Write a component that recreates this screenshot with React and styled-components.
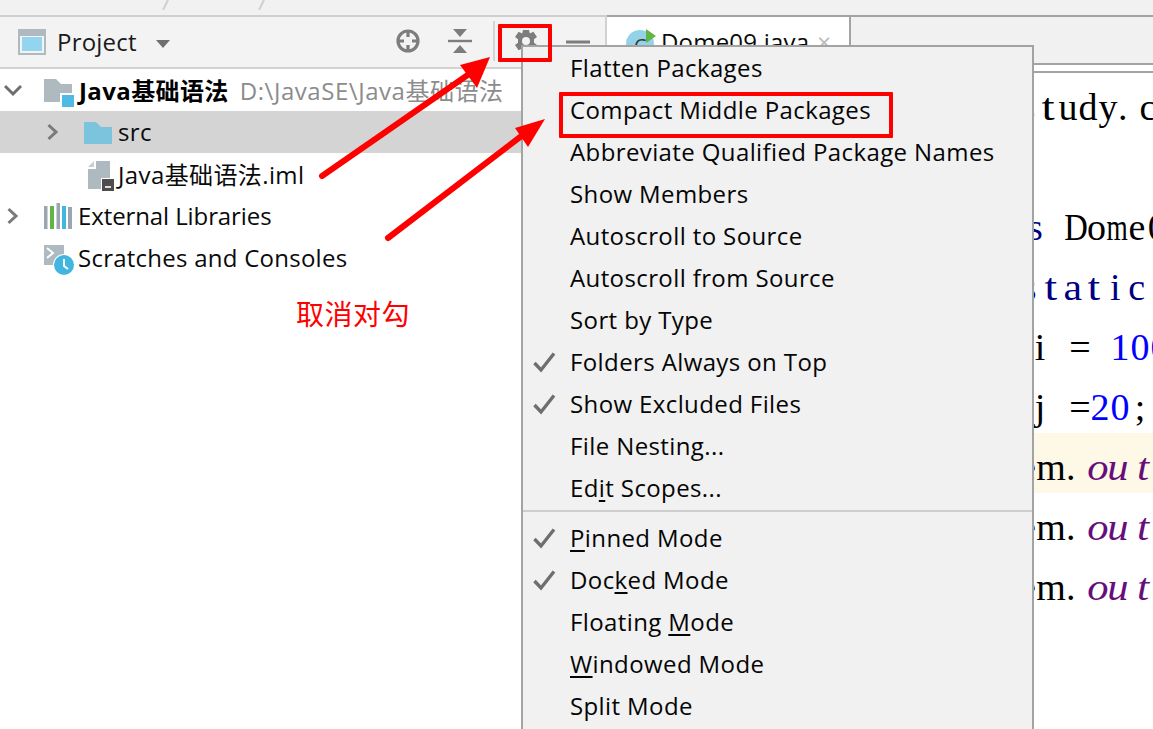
import React from "react";
import styled, { createGlobalStyle } from "styled-components";

const Global = createGlobalStyle`
  html, body { margin: 0; padding: 0; background: #fff; overflow: hidden; }
  #root { width: 1153px; height: 729px; }
`;
const UI = `"Open Sans", "Noto Sans CJK SC", sans-serif`;

const Page = styled.div`
  position: relative; width: 1153px; height: 729px; overflow: hidden;
  font-family: ${UI}; font-size: 24px; letter-spacing: 0.39px; color: #0a0a0a; background: #fff;
`;
const TopStrip = styled.div`
  position: relative; height: 15px; background: #f1f1f1; border-bottom: 2px solid #cfcfcf;
`;
const Tick = styled.svg`
  position: absolute; top: 0; left: ${p => p.$x}px; width: 8px; height: 10px;
`;
const Workspace = styled.div`
  display: grid; grid-template-columns: 607px 1fr; height: 712px;
`;
const ProjectPanel = styled.section`display: flex; flex-direction: column;`;
const Toolbar = styled.div`
  display: flex; align-items: center; height: 50px; padding-left: 18px; background: #f3f3f3;
  border-bottom: 2px solid #d2d2d2; border-right: 2px solid #d2d2d2; flex: none;
`;
const ProjectGlyph = styled.svg`width: 28px; height: 26px; flex: none;`;
const ToolTitle = styled.span`margin-left: 11px; line-height: 48px; color: #1a1a1a; letter-spacing: 0.2px;`;
const ToolGroup = styled.div`display: flex; align-items: center; margin-left: ${p => p.$ml}px;`;
const ToolButton = styled.svg`
  width: ${p => p.$w || 24}px; height: 24px; flex: none; margin-left: ${p => p.$ml || 0}px; margin-top: -2px;
`;
const ToolDivider = styled.div`width: 2px; height: 40px; background: #d4d4d4; margin-left: 21px; margin-top: -2px;`;
const Tree = styled.div`display: flex; flex-direction: column;`;
const TreeRow = styled.div`
  display: flex; align-items: center; height: 42px; padding-left: ${p => p.$indent}px;
  background: ${p => (p.$selected ? "#d4d4d4" : "#fff")}; white-space: nowrap;
`;
const RowText = styled.span`margin-top: -1px; letter-spacing: ${p => p.$ls ?? 0.39}px;`;
const Chevron = styled.svg`width: 18px; height: 18px; flex: none; margin-right: ${p => p.$mr}px;`;
const NodeIcon = styled.svg`width: 32px; height: 32px; flex: none; margin-right: ${p => p.$mr}px; margin-top: 6px;`;
const Bold = styled.strong`font-weight: 700; color: #000; margin-top: -1px; margin-left: 1px;`;
const PathHint = styled.span`color: #8c8c8c; margin-left: 11px; margin-top: -1px; letter-spacing: 0.55px;`;

const EditorPane = styled.section`display: flex; flex-direction: column; position: relative;`;
const TabBar = styled.div`
  display: flex; height: 46px; margin-top: -2px; background: #f1f1f1;
  border-top: 2px solid #a3a3a3; border-bottom: 2px solid #a3a3a3; flex: none;
`;
const Tab = styled.div`
  display: flex; align-items: flex-start; width: 244px; height: 46px; background: #fff; box-sizing: border-box;
  border-right: 2px solid #a3a3a3; padding-left: 19px; padding-top: 8px; line-height: 33px; letter-spacing: 0.2px;
`;
const TabIcon = styled.svg`width: 30px; height: 30px; flex: none; margin-right: 5px; margin-top: 3px;`;
const TabClose = styled.span`color: #b8b8b8; margin-left: 8px;`;
const SubBar = styled.div`height: 6px; background: #fff; border-bottom: 2px solid #a3a3a3; flex: none;`;
const CodeArea = styled.div`display: flex; flex-direction: column; background: #fff;`;
const CodeLine = styled.div`
  height: 60px; display: flex; align-items: center; white-space: nowrap;
  padding-left: ${p => p.$pl}px; background: ${p => (p.$current ? "#fef8e7" : "transparent")};
  font-family: "Liberation Serif", serif; font-size: 38px; letter-spacing: 0;
`;
const Ch = styled.span`
  display: flex; justify-content: ${p => (p.$flush ? "flex-start" : "center")}; flex: none; width: ${p => p.$w}px;
  color: ${p => p.$c || "#000"};
  font-style: ${p => (p.$i ? "italic" : "normal")}; transform: translateY(4px) scaleX(${p => p.$sx || 1});
`;

const Menu = styled.nav`
  position: absolute; left: 521px; top: 45px; width: 513px; height: 700px; box-sizing: border-box;
  background: #f1f1f1; border: 2px solid #a3a3a3; border-bottom: 0;
  display: flex; flex-direction: column;
`;
const MenuItem = styled.div`
  position: relative; height: 42px; line-height: 42px; padding-left: 47px; white-space: nowrap; color: #050505; flex: none;
`;
const Check = styled.svg`position: absolute; left: 9px; top: 9px; width: 24px; height: 24px;`;
const Key = styled.span`text-decoration: underline; text-underline-offset: 3px; text-decoration-thickness: 2px;`;
const Sep = styled.div`height: 2px; background: #cdcdcd; margin: 1px 0 5px; flex: none;`;

const Overlay = styled.div`position: absolute; inset: 0; pointer-events: none;`;
const Mark = styled.div`
  position: absolute; box-sizing: border-box; border: 4px solid #f00; border-radius: 1px;
  left: ${p => p.$x}px; top: ${p => p.$y}px; width: ${p => p.$w}px; height: ${p => p.$h}px;
`;
const Arrows = styled.svg`position: absolute; left: 0; top: 0;`;
const Note = styled.div`
  position: absolute; left: 296px; top: 294px; font: 28px/38px "Noto Sans CJK SC", sans-serif; color: #f00; letter-spacing: 0.5px;
`;

const CheckMark = () => (
  <Check viewBox="0 0 24 24"><path d="M2.5 13 L9 20 L22 3.5" fill="none" stroke="#6e6e6e" strokeWidth="3.4" /></Check>
);
const items = [
  ["Flatten Packages"], ["Compact Middle Packages"], ["Abbreviate Qualified Package Names"], ["Show Members"],
  ["Autoscroll to Source"], ["Autoscroll from Source"], ["Sort by Type"],
  ["Folders Always on Top", true], ["Show Excluded Files", true], ["File Nesting..."],
];

const EDITOR_X = 607;
// anchor: index of a char and the page x where its cell must start
const Code = ({ text, width = () => 20, anchor, x, current, color, italicFrom, squeeze }) => {
  const chars = [...text];
  const before = chars.slice(0, anchor).reduce((s, c, i) => s + width(c, i), 0);
  return (
    <CodeLine $pl={Math.max(0, x - EDITOR_X - before)} $current={current}>
      {chars.map((c, i) => (
        <Ch
          key={i}
          $w={width(c, i)}
          $c={color ? color(i) : undefined}
          $flush={c === "."}
          $sx={squeeze ? squeeze(c) : 1}
          $i={italicFrom !== undefined && i >= italicFrom}
        >
          {c === " " ? "\u00a0" : c}
        </Ch>
      ))}
    </CodeLine>
  );
};
const Right = ({ x }) => <Chevron $mr={x} viewBox="0 0 18 18"><path d="M5.5 2 L13 9 L5.5 16" fill="none" stroke="#7a7a7a" strokeWidth="3" /></Chevron>;

const NAVY = "#000080";
const domeSqueeze = (c) => ({ D: 0.86, m: 0.72 }[c] || 1);
const sysWidth = (c, i) => (c === "m" ? 30 : i === 4 ? 17 : i === 9 ? 30 : c === "." && i === 6 ? 22 : 20);
const sysStretch = (c) => ({ o: 1.12, u: 1.12, t: 1.15 }[c] || 1);
const staticStretch = (c) => ({ t: 1.2, a: 1.1 }[c] || 1);

export default function App() {
  const sysColor = (i) => (i >= 7 && i < 10 ? "#660e7a" : "#000");
  return (
    <Page>
      <Global />
      <TopStrip>
        <Tick $x={162} viewBox="0 0 8 10"><path d="M1 10 L6 0" stroke="#cfcfcf" strokeWidth="2" /></Tick>
        <Tick $x={258} viewBox="0 0 8 10"><path d="M1 10 L6 0" stroke="#cfcfcf" strokeWidth="2" /></Tick>
      </TopStrip>
      <Workspace>
        <ProjectPanel>
          <Toolbar>
            <ProjectGlyph viewBox="0 0 28 26">
              <rect width="28" height="26" fill="#afb9c0" />
              <rect x="2" y="7" width="24" height="17" fill="#f3f3f3" />
              <rect x="4" y="8" width="20" height="14" fill="#93d4ee" />
            </ProjectGlyph>
            <ToolTitle>Project</ToolTitle>
            <ToolButton $ml={18} $w={16} viewBox="0 0 16 24"><path d="M1 11 H15 L8 19 Z" fill="#6e6e6e" /></ToolButton>
            <ToolGroup $ml={225}>
              <ToolButton viewBox="0 0 24 24">
                <circle cx="12" cy="12" r="10" fill="none" stroke="#7d7d7d" strokeWidth="3.2" />
                <path d="M12 2 V8 M12 16 V22 M2 12 H8 M16 12 H22" stroke="#7d7d7d" strokeWidth="3.2" />
              </ToolButton>
              <ToolButton $ml={28} viewBox="0 0 24 24">
                <path d="M0 12 H24" stroke="#7d7d7d" strokeWidth="2.4" />
                <path d="M5 0 H19 L12 8 Z M5 24 H19 L12 16 Z" fill="#7d7d7d" />
              </ToolButton>
              <ToolDivider />
              <ToolButton $ml={19} viewBox="0 0 24 24">
                <path d="M9 1 H15 L15.8 4.4 L19.4 2.8 L23 8 L20 10.2 V13.8 L23 16 L19.4 21.2 L15.8 19.6 L15 23 H9 L8.2 19.6 L4.6 21.2 L1 16 L4 13.8 V10.2 L1 8 L4.6 2.8 L8.2 4.4 Z M12 8 A4 4 0 1 0 12 16 A4 4 0 1 0 12 8 Z" fill="#7d7d7d" fillRule="evenodd" />
              </ToolButton>
              <ToolButton $ml={28} viewBox="0 0 24 24"><path d="M0 13 H24" stroke="#7d7d7d" strokeWidth="3" /></ToolButton>
            </ToolGroup>
          </Toolbar>
          <Tree>
            <TreeRow $indent={4}>
              <Chevron $mr={22} viewBox="0 0 18 18"><path d="M1 5 L9 13 L17 5" fill="none" stroke="#6e6e6e" strokeWidth="3" /></Chevron>
              <NodeIcon $mr={2} viewBox="0 0 32 32">
                <path d="M0 2 H12 L17 7 H28 V25 H0 Z" fill="#afb9c0" />
                <rect x="16" y="16" width="14" height="14" fill="#fff" />
                <rect x="18" y="18" width="12" height="12" fill="#4fbbe5" />
              </NodeIcon>
              <Bold>Java基础语法</Bold>
              <PathHint>D:\JavaSE\Java基础语法</PathHint>
            </TreeRow>
            <TreeRow $indent={43} $selected>
              <Right x={23} />
              <NodeIcon $mr={2} viewBox="0 0 32 32">
                <path d="M0 3 H12 L17 8 H28 V25 H0 Z" fill="#7cc4de" />
              </NodeIcon>
              <RowText>src</RowText>
            </TreeRow>
            <TreeRow $indent={88}>
              <NodeIcon $mr={-2} viewBox="0 0 32 32">
                <path d="M8 0 H22 V28 H0 V8 H8 Z" fill="#afb9c0" />
                <path d="M6 0 V6 H0 Z" fill="#c6ced3" />
                <rect x="13" y="17" width="14" height="13" fill="#fff" />
                <rect x="14" y="18" width="12" height="12" fill="#4d4d4d" />
                <rect x="17" y="25" width="6" height="2" fill="#ddd" />
              </NodeIcon>
              <RowText>Java基础语法.iml</RowText>
            </TreeRow>
            <TreeRow $indent={3}>
              <Right x={23} />
              <NodeIcon $mr={2} viewBox="0 0 32 32">
                <rect x="0" y="3" width="3.5" height="23" fill="#9aa7b0" />
                <rect x="6" y="3" width="4" height="23" fill="#62b543" />
                <rect x="12.5" y="0" width="3.5" height="26" fill="#9aa7b0" />
                <rect x="18" y="3" width="4" height="23" fill="#40b6e0" />
                <rect x="24" y="4" width="4" height="22" fill="#9aa7b0" />
              </NodeIcon>
              <RowText $ls={-0.1}>External Libraries</RowText>
            </TreeRow>
            <TreeRow $indent={44}>
              <NodeIcon $mr={2} viewBox="0 0 32 32">
                <rect x="0" y="0" width="20" height="20" fill="#afb9c0" />
                <path d="M3 3 L9 8 L3 13" fill="none" stroke="#fff" strokeWidth="2" />
                <circle cx="20" cy="20" r="11" fill="#fff" />
                <circle cx="20" cy="20" r="10" fill="#40b6e0" />
                <path d="M20 14 V21 L24 24" fill="none" stroke="#fff" strokeWidth="2" />
              </NodeIcon>
              <RowText $ls={0.25}>Scratches and Consoles</RowText>
            </TreeRow>
          </Tree>
        </ProjectPanel>
        <EditorPane>
          <TabBar>
            <Tab>
              <TabIcon viewBox="0 0 30 30">
                <circle cx="14" cy="16" r="14" fill="#92d3ea" />
                <text x="8" y="25" fontSize="20" fill="#3a3a3a" fontFamily="Open Sans">C</text>
                <path d="M20 1 L30 8 L20 15 Z" fill="#62b543" />
              </TabIcon>
              <span>Dome09.java</span>
              <TabClose>×</TabClose>
            </Tab>
          </TabBar>
          <SubBar />
          <CodeArea>
            <Code text="package com.kuang.study.c" anchor={19} x={1038} squeeze={(c) => (c === "t" ? 1.25 : 1)} />
            <CodeLine $pl={0} />
            <Code text="public class Dome0" anchor={13} x={1066} width={() => 20.3} squeeze={domeSqueeze}
              color={(i) => (i < 12 ? NAVY : "#000")} />
            <Code text="public static" anchor={8} x={1040} width={() => 21.5} squeeze={staticStretch} color={() => NAVY} />
            <Code text="int i = 100" anchor={4} x={1030}
              color={(i) => (i < 3 ? NAVY : i >= 8 ? "#0000ff" : "#000")} />
            <Code text="int j =20;" anchor={4} x={1030}
              color={(i) => (i < 3 ? NAVY : i === 7 || i === 8 ? "#0000ff" : "#000")} />
            <Code text="System.out." anchor={5} x={1036} width={sysWidth} squeeze={sysStretch} current color={sysColor} italicFrom={7} />
            <Code text="System.out." anchor={5} x={1036} width={sysWidth} squeeze={sysStretch} color={sysColor} italicFrom={7} />
            <Code text="System.out." anchor={5} x={1036} width={sysWidth} squeeze={sysStretch} color={sysColor} italicFrom={7} />
          </CodeArea>
        </EditorPane>
      </Workspace>
      <Menu>
        {items.map(([t, c]) => (
          <MenuItem key={t}>{c && <CheckMark />}{t}</MenuItem>
        ))}
        <MenuItem>Ed<Key>i</Key>t Scopes...</MenuItem>
        <Sep />
        <MenuItem><CheckMark /><Key>P</Key>inned Mode</MenuItem>
        <MenuItem><CheckMark />Doc<Key>k</Key>ed Mode</MenuItem>
        <MenuItem>Floating <Key>M</Key>ode</MenuItem>
        <MenuItem><Key>W</Key>indowed Mode</MenuItem>
        <MenuItem>Split Mode</MenuItem>
      </Menu>
      <Overlay>
        <Mark $x={498} $y={24} $w={54} $h={38} />
        <Mark $x={559} $y={92} $w={334} $h={46} />
        <Arrows width="1153" height="729" viewBox="0 0 1153 729">
          <path d="M322 176 L472 72" stroke="#f00" strokeWidth="6" strokeLinecap="round" />
          <path d="M490 57 L460 65 L477 88 Z" fill="#f00" />
          <path d="M388 238 L528 131" stroke="#f00" strokeWidth="6" strokeLinecap="round" />
          <path d="M545 119 L515 128 L528 147 Z" fill="#f00" />
        </Arrows>
        <Note>取消对勾</Note>
      </Overlay>
    </Page>
  );
}
